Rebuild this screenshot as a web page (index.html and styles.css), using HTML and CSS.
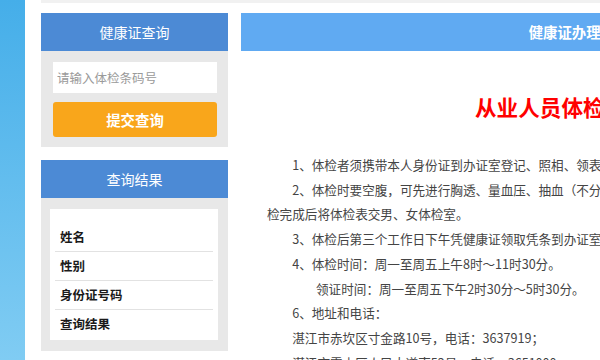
FILE: index.html
```html
<!DOCTYPE html>
<html lang="zh-CN">
<head>
  <meta charset="UTF-8">
  <meta name="viewport" content="width=device-width, initial-scale=1.0">
  <title>健康证查询</title>
  <link rel="stylesheet" href="styles.css">
</head>
<body>
  <div class="layout">
    <!-- Left colour rail -->
    <div class="rail"></div>

    <div class="page">
      <div class="columns">
        <!-- Sidebar -->
        <div class="sidebar">
          <section class="panel">
            <h2 class="panel-title">健康证查询</h2>
            <div class="panel-body search-body">
              <input class="code-input" type="text" placeholder="请输入体检条码号">
              <button class="submit-btn" type="button">提交查询</button>
            </div>
          </section>

          <section class="panel">
            <h2 class="panel-title">查询结果</h2>
            <div class="panel-body result-body">
              <ul class="result-list">
                <li>姓名</li>
                <li>性别</li>
                <li>身份证号码</li>
                <li>查询结果</li>
              </ul>
            </div>
          </section>
        </div>

        <!-- Main content -->
        <main class="content">
          <h2 class="content-title">健康证办理流程</h2>
          <div class="article">
            <h1 class="article-title">从业人员体检办证须知</h1>
            <p>1、体检者须携带本人身份证到办证室登记、照相、领表，并缴纳体检费用；</p>
            <p>2、体检时要空腹，可先进行胸透、量血压、抽血（不分先后顺序），然后到内科、外科检查，体<br>检完成后将体检表交男、女体检室。</p>
            <p>3、体检后第三个工作日下午凭健康证领取凭条到办证室领取健康证；</p>
            <p>4、体检时间：周一至周五上午8时～11时30分。</p>
            <p class="sub">领证时间：周一至周五下午2时30分～5时30分。</p>
            <p>6、地址和电话：</p>
            <p>湛江市赤坎区寸金路10号，电话：3637919；</p>
            <p>湛江市霞山区人民大道南52号，电话：3651000。</p>
          </div>
        </main>
      </div>
    </div>
  </div>
</body>
</html>
```

FILE: styles.css
```css
* {
  margin: 0;
  padding: 0;
  box-sizing: border-box;
}

body {
  font-family: "Noto Sans CJK SC", "Noto Sans", sans-serif;
  background: #fff;
  color: #444;
  width: 600px;
  height: 360px;
  overflow: hidden;
}

.layout {
  display: flex;
  height: 360px;
}

/* Left rail */
.rail {
  flex: 0 0 25px;
  background: linear-gradient(180deg, #45aee9, #80ccf3);
}

.page {
  flex: 0 0 auto;
  margin-left: 16px;
  border-top: 3px solid #f1f1f1;
  padding-top: 10px;
}

.columns {
  display: flex;
  gap: 13px;
  align-items: flex-start;
}

/* Sidebar */
.sidebar {
  width: 187px;
  display: flex;
  flex-direction: column;
  gap: 13px;
}

.panel-title {
  height: 38px;
  line-height: 38px;
  background: #4c8ad5;
  color: #fff;
  font-size: 14px;
  font-weight: normal;
  text-align: center;
}

.panel-body {
  background: #e8e8e8;
}

.search-body {
  padding: 11px 11px 10px 12px;
}

.code-input {
  display: block;
  width: 164px;
  height: 31px;
  border: none;
  outline: none;
  background: #fff;
  padding: 0 4px;
  font-family: inherit;
  font-size: 12.5px;
  color: #333;
}

.code-input::placeholder {
  color: #9a9a9a;
}

.submit-btn {
  display: block;
  width: 164px;
  height: 35px;
  margin-top: 9px;
  border: none;
  border-radius: 3px;
  background: #f9a61b;
  color: #fff;
  font-family: inherit;
  font-size: 14.4px;
  font-weight: bold;
}

.result-body {
  padding: 11px 10px 11px 9px;
}

.result-list {
  list-style: none;
  background: #fff;
  padding: 14px 5px 1px;
}

.result-list li {
  height: 29px;
  line-height: 28px;
  padding-left: 5px;
  font-size: 12.5px;
  font-weight: bold;
  color: #1a1a1a;
  border-bottom: 1px solid #e2e2e2;
}

.result-list li:last-child {
  border-bottom: none;
}

/* Main content */
.content {
  width: 676px;
}

.content-title {
  height: 38px;
  line-height: 38px;
  background: #60aaf2;
  color: #fff;
  font-size: 14.4px;
  font-weight: bold;
  text-align: center;
}

.article {
  padding: 41px 26px 0;
}

.article-title {
  font-size: 21.6px;
  line-height: 30px;
  font-weight: bold;
  color: #f00;
  text-align: center;
  padding-left: 8px;
  margin-bottom: 31px;
}

.article p {
  font-size: 12.6px;
  line-height: 24.7px;
  text-indent: 2em;
  white-space: nowrap;
}

.article p.sub {
  text-indent: 49px;
}
```
